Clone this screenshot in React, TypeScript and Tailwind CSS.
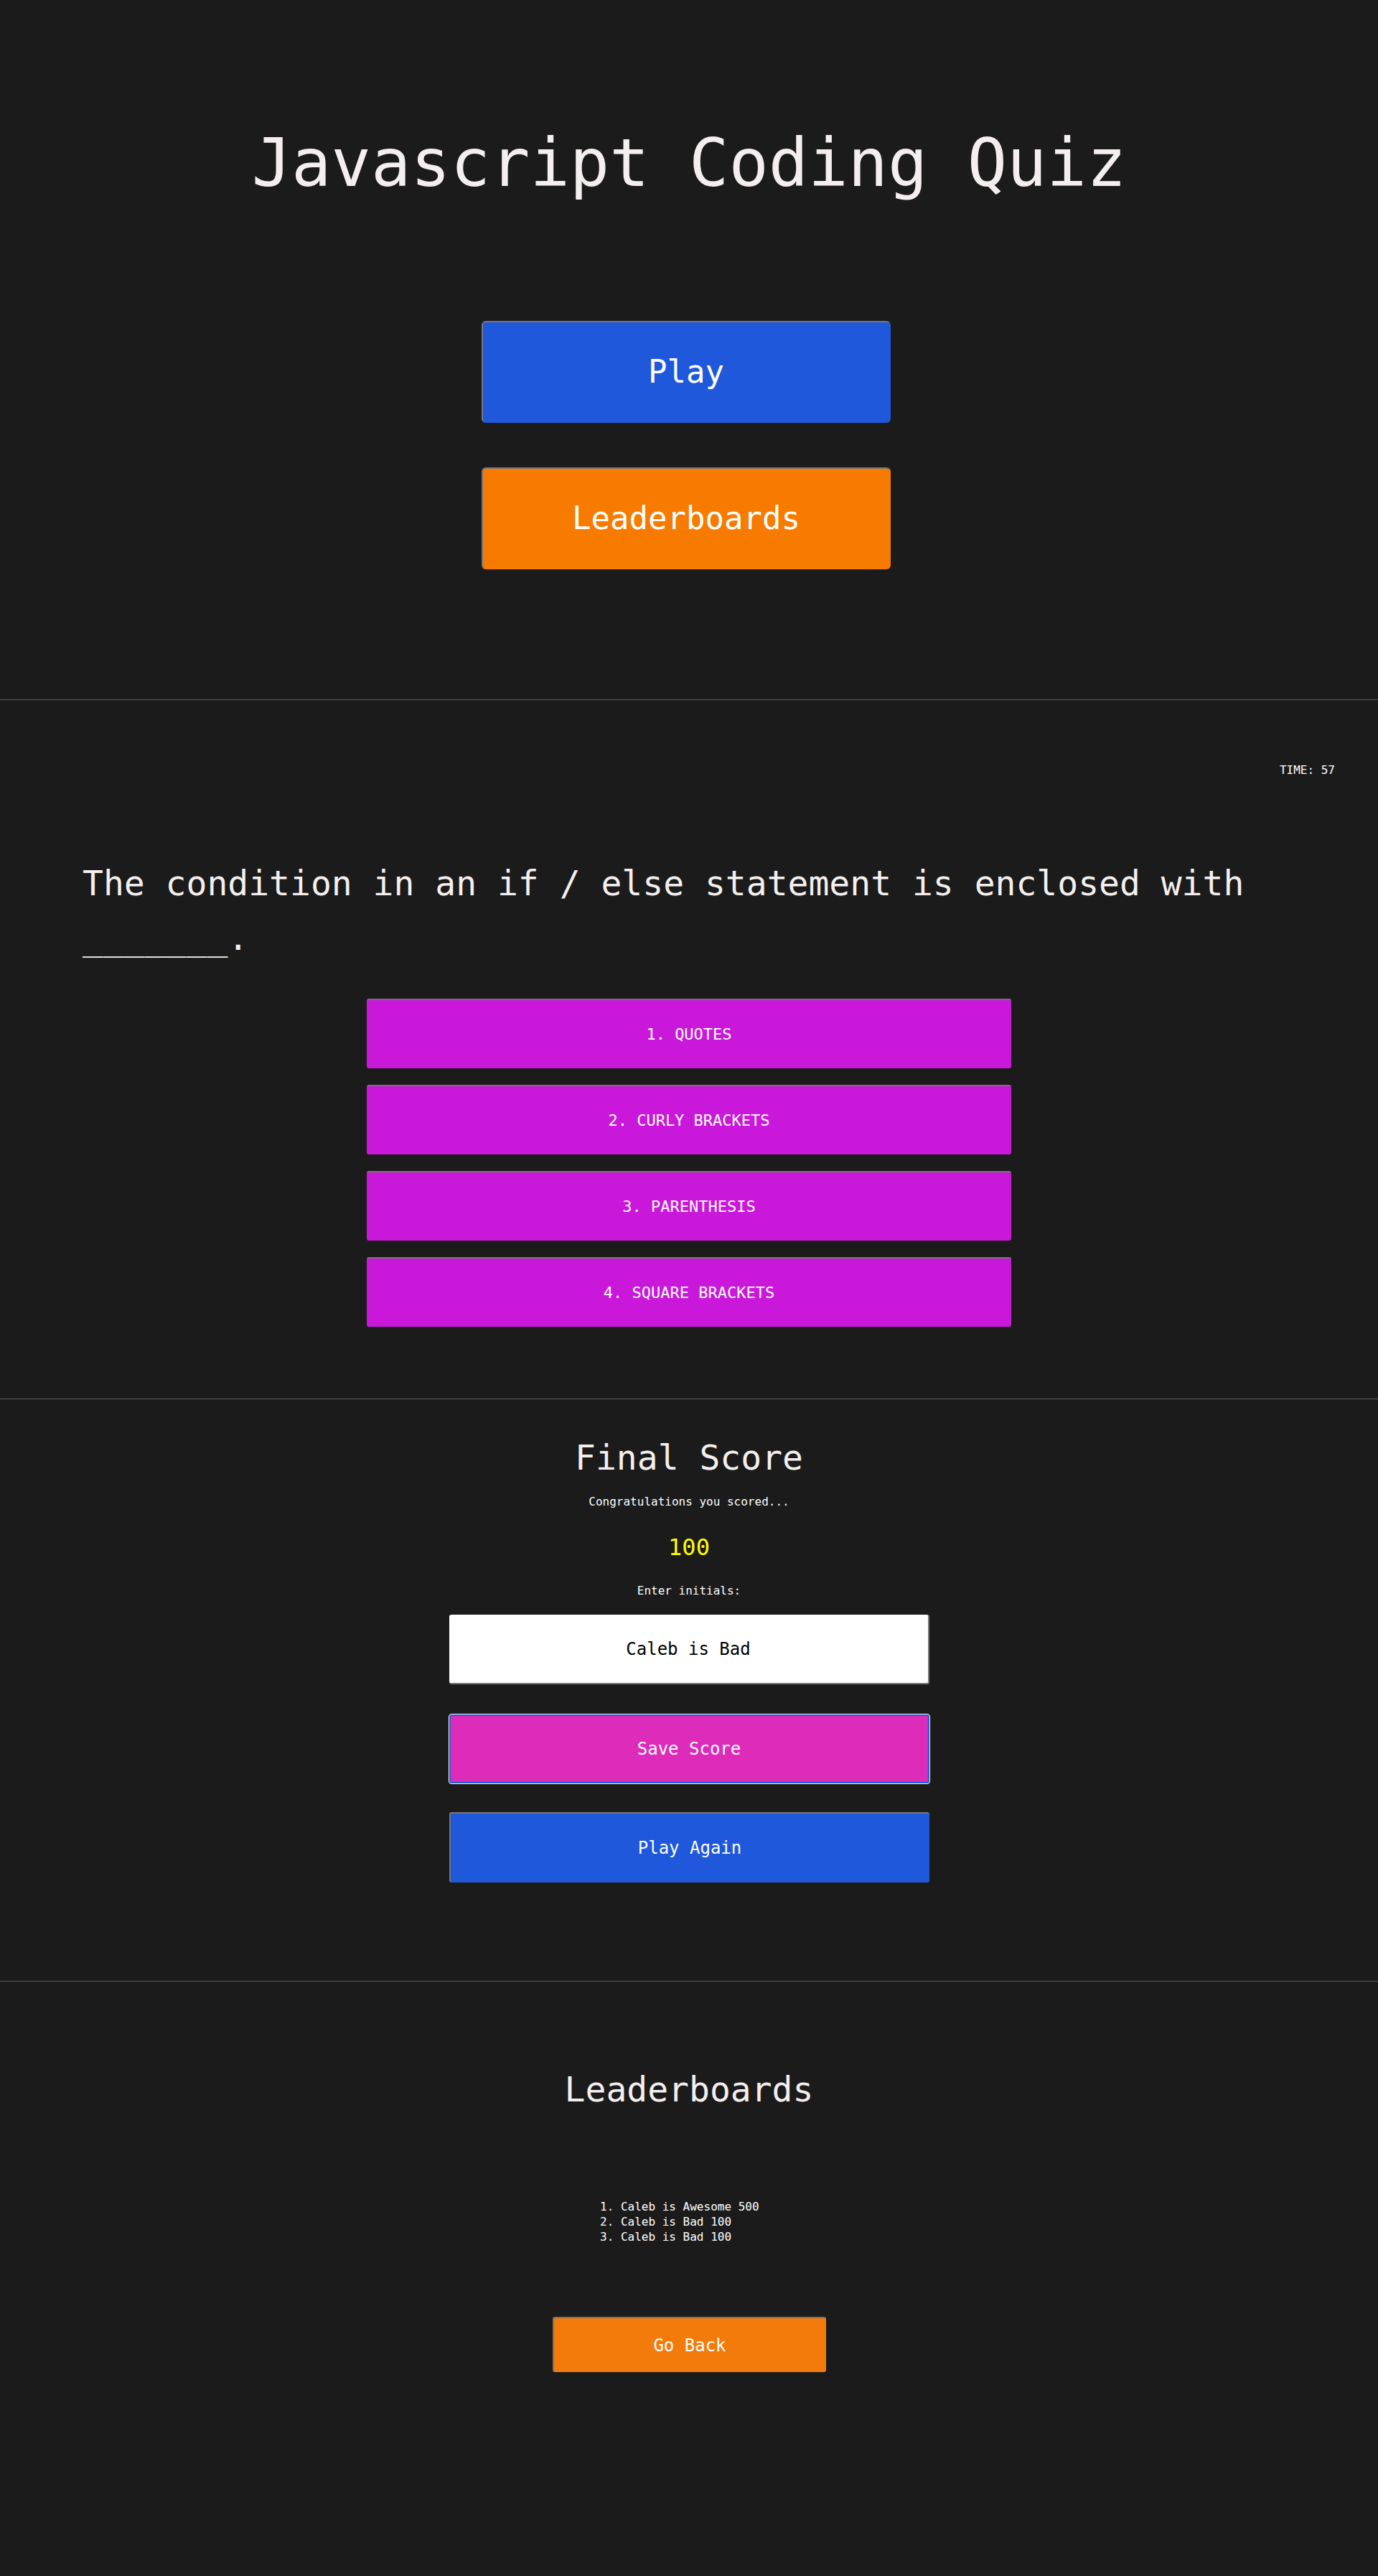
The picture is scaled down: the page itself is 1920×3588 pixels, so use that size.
import { FC } from "react";

const mono = "font-['DejaVu_Sans_Mono','Liberation_Mono',monospace]";

const answers = ["1. QUOTES", "2. CURLY BRACKETS", "3. PARENTHESIS", "4. SQUARE BRACKETS"];
const scores = ["1. Caleb is Awesome 500", "2. Caleb is Bad 100", "3. Caleb is Bad 100"];

const StartScreen: FC = () => (
  <section className="h-[975px] border-b border-[#5c5c5c] flex flex-col items-center pt-[182px]">
    <h1 className="text-[92px] leading-none text-[#f4efee]">Javascript Coding Quiz</h1>
    <button className="mt-[173px] ml-[-8px] w-[570px] h-[142px] rounded-[6px] bg-[#2058dc] text-white text-[44px] border-2 border-t-[#787878] border-l-[#787878] border-r-transparent border-b-transparent">
      Play
    </button>
    <button className="mt-[62px] ml-[-8px] w-[570px] h-[142px] rounded-[6px] bg-[#f77b00] text-white text-[44px] border-2 border-t-[#787878] border-l-[#787878] border-r-transparent border-b-transparent">
      Leaderboards
    </button>
  </section>
);

const QuestionScreen: FC = () => (
  <section className="h-[974px] border-b border-[#5c5c5c] flex flex-col pt-[90px]">
    <div className="text-right pr-[60px] text-[16px] leading-none text-white">TIME: 57</div>
    <h2 className="mt-[111px] pl-[115px] pr-[100px] text-[48px] leading-[76px] text-[#f4efee]">
      The condition in an if / else statement is enclosed with _______.
    </h2>
    <div className="mt-[47px] flex flex-col items-center gap-[23px]">
      {answers.map((a) => (
        <button
          key={a}
          className="w-[898px] h-[97px] rounded-[3px] bg-[#c918da] text-white text-[22px] border-t-2 border-[#767676]"
        >
          {a}
        </button>
      ))}
    </div>
  </section>
);

const ScoreScreen: FC = () => (
  <section className="h-[811px] border-b border-[#5c5c5c] flex flex-col items-center pt-[57px] text-white">
    <h2 className="text-[48px] leading-none text-[#f4efee]">Final Score</h2>
    <p className="mt-[30px] text-[16px] leading-none">Congratulations you scored...</p>
    <p className="mt-[39px] text-[32px] leading-none text-[#ffff00]">100</p>
    <p className="mt-[37px] text-[16px] leading-none">Enter initials:</p>
    <input
      readOnly
      value="Caleb is Bad"
      className="mt-[25px] w-[669px] h-[97px] bg-white text-black text-center text-[24px] rounded-[3px] border-b-2 border-r-2 border-[#7a7a7a] outline-none"
    />
    <button className="mt-[42px] w-[669px] h-[96px] rounded-[3px] bg-[#dd2bba] text-white text-[24px] border-2 border-[#1c5ed6] outline outline-1 outline-white">
      Save Score
    </button>
    <button className="mt-[40px] w-[669px] h-[98px] rounded-[3px] bg-[#2058dc] text-white text-[24px] border-t-2 border-l-2 border-[#767676]">
      Play Again
    </button>
  </section>
);

const LeaderboardScreen: FC = () => (
  <section className="h-[829px] flex flex-col items-center pt-[126px] text-white">
    <h2 className="text-[48px] leading-none text-[#f4efee]">Leaderboards</h2>
    <ol className="mt-[129px] w-[248px] text-[16px] leading-[21px]">
      {scores.map((s, i) => (
        <li key={i}>{s}</li>
      ))}
    </ol>
    <button className="mt-[101px] w-[381px] h-[77px] rounded-[3px] bg-[#f27b0b] text-white text-[24px] border-t-2 border-l-2 border-[#787878]">
      Go Back
    </button>
  </section>
);

export default function App() {
  return (
    <div className={`${mono} bg-[#1b1b1b] min-h-[3588px] w-full`}>
      <StartScreen />
      <QuestionScreen />
      <ScoreScreen />
      <LeaderboardScreen />
    </div>
  );
}
